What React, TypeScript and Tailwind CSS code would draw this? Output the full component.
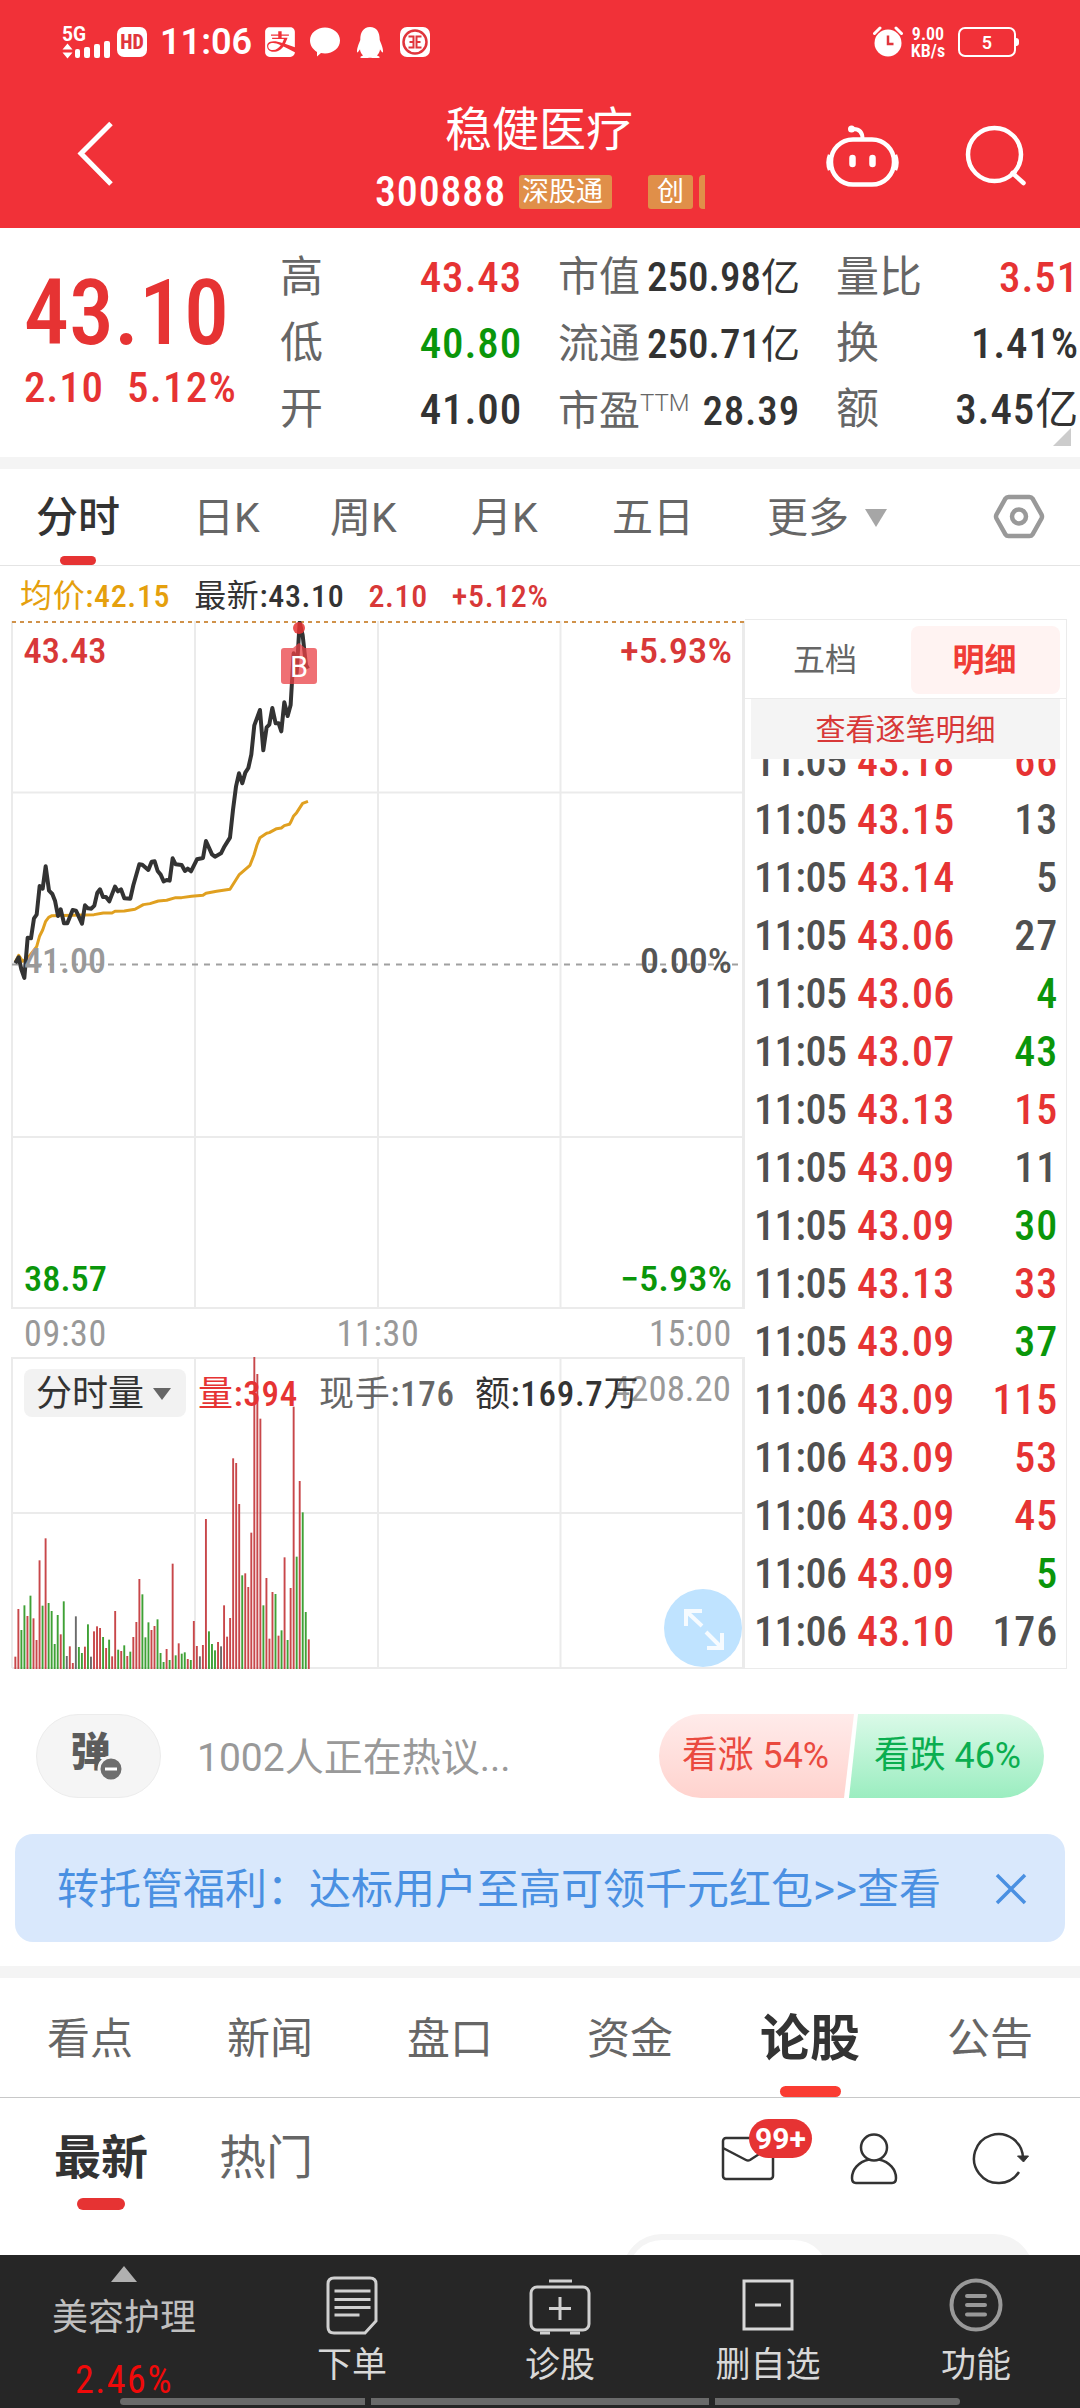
import clsx from "clsx"
import { FaAlipay, FaQq } from "react-icons/fa6"

const UP = "text-[#e63333]"
const DOWN = "text-[#0a960a]"
const DARK = "text-[#333333]"
const FLAT = "text-[#505050]"
const NUM = "font-medium font-stretch-75% tracking-[0.02em]"

const rangeRows = [
  { label: "高", value: "43.43", color: UP },
  { label: "低", value: "40.80", color: DOWN },
  { label: "开", value: "41.00", color: DARK },
]

const periods = [
  { label: "日K", width: "w-[137px]" },
  { label: "周K", width: "w-[141px]" },
  { label: "月K", width: "w-[141px]" },
  { label: "五日", width: "w-[155px]" },
]

const trades = [
  { time: "11:05", price: "43.18", volume: "66", color: UP },
  { time: "11:05", price: "43.15", volume: "13", color: FLAT },
  { time: "11:05", price: "43.14", volume: "5", color: FLAT },
  { time: "11:05", price: "43.06", volume: "27", color: FLAT },
  { time: "11:05", price: "43.06", volume: "4", color: DOWN },
  { time: "11:05", price: "43.07", volume: "43", color: DOWN },
  { time: "11:05", price: "43.13", volume: "15", color: UP },
  { time: "11:05", price: "43.09", volume: "11", color: FLAT },
  { time: "11:05", price: "43.09", volume: "30", color: DOWN },
  { time: "11:05", price: "43.13", volume: "33", color: UP },
  { time: "11:05", price: "43.09", volume: "37", color: DOWN },
  { time: "11:06", price: "43.09", volume: "115", color: UP },
  { time: "11:06", price: "43.09", volume: "53", color: UP },
  { time: "11:06", price: "43.09", volume: "45", color: UP },
  { time: "11:06", price: "43.09", volume: "5", color: DOWN },
  { time: "11:06", price: "43.10", volume: "176", color: FLAT },
]

// r = up, g = down, k = flat; the number is the bar height in thirds of a pixel
const volumeBars =
  "r37 r180 g117 g191 r159 g220 r152 r87 r326 g190 r392 g198 g174 g75 g162 r104 g203 k39 r68 r18 k158 g66 g48 r67 g134 k37 r113 r128 r123 g96 r63 g88 r38 r174 g58 r54 g71 r39 g52 r96 r141 r270 g224 g95 g140 r117 r129 g149 g48 g21 r60 g27 r316 g41 r77 g46 g50 r30 g27 r144 r69 k38 r72 r450 g113 g75 g56 r81 k68 r191 r97 r153 r632 r618 r495 g281 r287 r246 r409 r936 r885 r751 g191 r273 r91 r231 g225 r100 g116 r335 g87 r243 r787 g337 r564 g470 g171 r89"
    .split(" ")
    .map((b) => ({ kind: b[0], height: Number(b.slice(1)) / 3 }))

const barColor: Record<string, string> = { r: "#c8474a", g: "#3fa136", k: "#6b6b6b" }

const priceLine =
  "46,1060 56,1042 64,1078 73,1104 83,983 93,985 102,925 110,914 119,828 128,836 137,769 147,842 157,852 165,872 174,918 182,898 192,940 202,940 218,900 228,902 246,941 255,886 264,895 274,896 283,887 292,848 300,838 309,861 318,861 328,874 345,830 354,844 363,838 373,865 391,866 400,826 418,763 427,764 445,780 455,755 464,754 473,783 482,794 491,814 500,810 509,812 518,745 527,763 545,765 555,783 563,776 573,784 591,748 609,744 618,693 636,733 645,740 663,730 672,712 690,683 699,600 708,530 717,490 727,520 736,488 745,474 754,434 763,346 780,300 790,421 800,352 808,344 817,294 827,340 836,340 844,364 853,277 863,318 872,285 881,130 890,190 899,38 908,75 914,130 918,165 924,176"

const averageLine =
  "46,1056 56,1036 68,1054 82,1046 110,1010 119,978 128,960 137,934 146,922 156,917 282,914 310,909 336,909 345,904 373,903 405,898 430,884 450,881 475,873 500,871 527,863 545,863 575,859 609,856 618,850 650,844 690,838 717,795 750,766 762,735 771,705 780,683 800,670 808,668 830,656 844,654 853,647 868,643 872,637 881,618 890,608 908,580 924,574"

const sections = ["看点", "新闻", "盘口", "资金", "论股", "公告"]

function StatusBar() {
  return (
    <div className="flex h-[84px] items-center pr-[61px] pl-[62px]">
      <svg width="49" height="36" viewBox="0 0 49 36" fill="#fff">
        <text x="0" y="16.500" fontSize="20" fontWeight="700" textLength="24" lengthAdjust="spacingAndGlyphs">
          5G
        </text>
        <path d="M0.500 25.500 5.500 19.500 10.500 25.500zM0.500 28.500 5.500 34.500 10.500 28.500z" />
        <rect x="13" y="25" width="5" height="9" rx="2" />
        <rect x="22" y="23" width="6" height="11" rx="2" />
        <rect x="32" y="20" width="6" height="14" rx="2" />
        <rect x="42" y="17" width="6" height="17" rx="2" />
      </svg>
      <div className="ml-1.5 flex h-[30px] w-[30px] items-center justify-center rounded-[7px] bg-white text-[20px] leading-none font-extrabold text-[#e0353c] font-stretch-75%">
        HD
      </div>
      <span className="ml-[13px] w-[95px] text-[36px] leading-none font-semibold">11:06</span>
      <FaAlipay className="ml-[10px] h-[34px] w-[30px]" />
      <svg className="ml-[15px]" width="30" height="30" viewBox="0 0 30 30" fill="#fff">
        <path d="M15 0.500C23 0.500 30 6 30 13.500S23 26.500 15 26.500c-1.500 0-3-.2-4-.5L7 29.500V25C3 22.500 0 18.500 0 13.500 0 6 7 .5 15 .5z" />
      </svg>
      <FaQq className="ml-[15px] h-[31px] w-[30px]" />
      <svg className="ml-[15px]" width="30" height="30" viewBox="0 0 30 30" fill="none">
        <rect width="30" height="30" rx="7" fill="#fff" />
        <circle cx="15" cy="15" r="11.500" stroke="#e0353c" strokeWidth="2.500" />
        <path d="M8.500 9.500H13.500V20.500H8.500M21.500 9.500H16.500V20.500H21.500M9.500 15H13.500M16.500 15H20.500" stroke="#e0353c" strokeWidth="2" />
      </svg>
      <div className="ml-auto flex items-center">
        <svg width="30" height="32" viewBox="0 0 30 32">
          <circle cx="15" cy="17" r="13.500" fill="#fff" />
          <path d="M1.500 7.500 7 2M28.500 7.500 23 2" stroke="#fff" strokeWidth="3" strokeLinecap="round" />
          <path d="M15 9.500V18h5.500" stroke="#e0353c" strokeWidth="2.500" fill="none" />
        </svg>
        <div className="ml-[7px] flex w-9 flex-col items-center text-[18px] leading-[17px] font-semibold font-stretch-75%">
          <span>9.00</span>
          <span>KB/s</span>
        </div>
        <div className="ml-3 flex h-[30px] w-[58px] items-center justify-center rounded-[7px] border-[2.5px] border-white text-[18px] font-semibold">
          5
        </div>
        <div className="h-2 w-[3px] rounded-r bg-white" />
      </div>
    </div>
  )
}

function Header() {
  return (
    <header className="h-[228px] shrink-0 bg-[#f13138] text-white">
      <StatusBar />
      <div className="flex h-[144px] items-start pr-[53px] pl-[76px]">
        <svg className="mt-9" width="40" height="68" viewBox="0 0 40 68" fill="none" stroke="#fff" strokeWidth="5">
          <path d="M35 3.500 5 33.500 35 64" />
        </svg>
        <div className="ml-[259px] flex w-[330px] flex-col">
          <h1 className="mt-[17px] ml-[70px] text-[47px] leading-[58px]">稳健医疗</h1>
          <div className="mt-[15px] flex h-[36px] items-center">
            <span className={clsx("w-[144px] text-[42px] leading-none", NUM)}>300888</span>
            <span className="flex h-[34px] w-[93px] items-center rounded-[3px] bg-[#e08f49] pl-[3px] text-[27px] leading-none">
              深股通
            </span>
            <span className="ml-9 flex h-[34px] w-[45px] items-center justify-center rounded-[3px] bg-[#e08f49] text-[27px] leading-none">
              创
            </span>
            <span className="ml-1.5 h-[34px] w-1.5 rounded-l bg-[#e08f49]" />
          </div>
        </div>
        <svg className="mt-[38px] ml-auto" width="74" height="66" viewBox="0 0 74 66" fill="none" stroke="#fff" strokeWidth="4.500">
          <rect x="5" y="17.500" width="63" height="45" rx="22" />
          <path d="M4 33c-2 5-2 10 0 15M69 33c2 5 2 10 0 15" />
          <path d="M36.500 17c0-7-3-10-9-10" strokeWidth="4" />
          <circle cx="25.500" cy="7" r="3.500" fill="#fff" stroke="none" />
          <path d="M26.500 36v6M46.500 36v6" strokeWidth="6.500" strokeLinecap="round" />
        </svg>
        <svg className="mt-10 ml-[65px]" width="62" height="64" viewBox="0 0 62 64" fill="none" stroke="#fff" strokeWidth="4.500">
          <circle cx="29.500" cy="30.500" r="26.500" />
          <path d="m47.500 49 11 10" strokeLinecap="round" />
        </svg>
      </div>
    </header>
  )
}

function QuoteSummary() {
  return (
    <section className="flex h-[229px] shrink-0 bg-white text-[43px] leading-[66px] whitespace-nowrap text-[#666666]">
      <div className={clsx("w-[280px] pl-6", NUM, UP)}>
        <div className="mt-[40px] text-[90px] leading-[92px] tracking-normal">43.10</div>
        <div className="mt-[-6px] flex gap-[23px]">
          <span>2.10</span>
          <span className="tracking-[0.03em]">5.12%</span>
        </div>
      </div>
      <div className="mt-4 w-[242px]">
        {rangeRows.map((row) => (
          <div key={row.label} className="flex justify-between">
            <span>{row.label}</span>
            <span className={clsx(NUM, row.color)}>{row.value}</span>
          </div>
        ))}
      </div>
      <div className="mt-4 ml-[36px] w-[242px] text-[41px]">
        <div className="flex justify-between">
          <span>市值</span>
          <span className={clsx("font-medium font-stretch-75%", DARK)}>
            250.98<span className="text-[39px] font-normal">亿</span>
          </span>
        </div>
        <div className="flex justify-between">
          <span>流通</span>
          <span className={clsx("font-medium font-stretch-75%", DARK)}>
            250.71<span className="text-[39px] font-normal">亿</span>
          </span>
        </div>
        <div className="flex justify-between">
          <span className="flex">
            市盈
            <span className="-mt-2 text-[24px] font-light">TTM</span>
          </span>
          <span className={clsx(NUM, DARK)}>28.39</span>
        </div>
      </div>
      <div className="mt-4 ml-[36px] w-[243px]">
        <div className="flex justify-between">
          <span>量比</span>
          <span className={clsx(NUM, UP)}>3.51</span>
        </div>
        <div className="flex justify-between">
          <span>换</span>
          <span className={clsx(NUM, DARK)}>1.41%</span>
        </div>
        <div className="relative flex justify-between">
          <span>额</span>
          <span className={clsx(NUM, DARK)}>
            3.45<span className="font-normal">亿</span>
          </span>
          <svg className="absolute right-2 -bottom-1" width="18" height="18">
            <path d="M18 0v18H0z" fill="#cccccc" />
          </svg>
        </div>
      </div>
    </section>
  )
}

function PeriodTabs() {
  return (
    <nav className="flex h-[97px] shrink-0 items-stretch border-b border-[#e4e4e4] bg-white pl-9 text-[41px] leading-[98px] text-[#666666]">
      <div className={clsx("flex w-[157px] flex-col text-[42px] font-medium", DARK)}>
        <span className="h-[87px]">分时</span>
        <span className="ml-6 h-[9px] w-9 rounded-full bg-[#e63333]" />
      </div>
      {periods.map((p) => (
        <span key={p.label} className={p.width}>
          {p.label}
        </span>
      ))}
      <span className="w-[82px]">更多</span>
      <svg className="mt-[39px] ml-[15px]" width="24" height="20">
        <path d="M1 1h22L12 19z" fill="#a6a6a6" />
      </svg>
      <svg className="mt-[23px] ml-[105px]" width="52" height="50" viewBox="0 0 52 50" fill="none" stroke="#999999" strokeWidth="4.500">
        <path d="M15.500 5h21q2 0 3 1.500l9 16q1 2 0 4l-9 16q-1 1.500-3 1.500h-21q-2 0-3-1.500l-9-16q-1-2 0-4l9-16q1-1.500 3-1.500z" />
        <circle cx="26" cy="24.500" r="7" />
      </svg>
    </nav>
  )
}

function PriceChart() {
  return (
    <svg className="block" width="745" height="736" viewBox="0 621 745 736" fill="none">
      <path d="M12 621V1309M195 621V1309M378 621V1309M560.500 621V1309M12 792.500H744M12 1137H744M12 1308H744" stroke="#ebebeb" strokeWidth="2" />
      <path d="M743.500 619V1309" stroke="#ebebeb" strokeWidth="3" />
      <path d="M12 964.500H744" stroke="#a0a0a0" strokeWidth="2" strokeDasharray="6 6" />
      <path d="M12 622H744" stroke="#d0924a" strokeWidth="2" strokeDasharray="4 4" />
      <g transform="translate(0 610) scale(0.3333)" strokeLinejoin="round" strokeWidth="12">
        <polyline points={averageLine} stroke="#e0a020" strokeWidth="9" />
        <polyline points={priceLine} stroke="#333333" />
      </g>
      <circle cx="299" cy="628" r="6" fill="#e63333" fillOpacity="0.85" />
      <path d="M293 648l6-5 6 5h9a3 3 0 0 1 3 3v30a3 3 0 0 1-3 3h-30a3 3 0 0 1-3-3v-30a3 3 0 0 1 3-3z" fill="#ea4046" fillOpacity="0.75" />
      <text x="299" y="676.500" fontSize="29" fill="#fff" textAnchor="middle">
        B
      </text>
      <g fontSize="35" className="font-medium font-stretch-75%">
        <text x="23.5" y="662.500" fill="#d83838" textLength="83" lengthAdjust="spacingAndGlyphs">
          43.43
        </text>
        <text x="620" y="662.500" fill="#d83838" textLength="112" lengthAdjust="spacingAndGlyphs">
          +5.93%
        </text>
        <text x="24" y="973" fill="#999999" textLength="82" lengthAdjust="spacingAndGlyphs">
          41.00
        </text>
        <text x="640" y="973" fill="#555555" textLength="92" lengthAdjust="spacingAndGlyphs">
          0.00%
        </text>
        <text x="24" y="1291" fill="#0a960a" textLength="83" lengthAdjust="spacingAndGlyphs">
          38.57
        </text>
        <text x="620" y="1291" fill="#0a960a" textLength="112" lengthAdjust="spacingAndGlyphs">
          −5.93%
        </text>
      </g>
      <g fontSize="36" fill="#999999" className="tracking-[0.02em] font-stretch-75%">
        <text x="24" y="1346">09:30</text>
        <text x="378" y="1346" textAnchor="middle">11:30</text>
        <text x="732" y="1346" textAnchor="end">15:00</text>
      </g>
    </svg>
  )
}

function VolumeChart() {
  return (
    <div className="relative h-[312px] w-[745px]">
      <svg className="block" width="745" height="312" viewBox="0 1357 745 312" fill="none">
        <path d="M12 1357V1668M195 1357V1668M378 1357V1668M560.500 1357V1668M12 1358H744M12 1513H744M12 1668H744" stroke="#ebebeb" strokeWidth="2" />
        <path d="M743.500 1357V1669" stroke="#ebebeb" strokeWidth="3" />
        {volumeBars.map((bar, i) => (
          <rect key={i} x={14.4 + i * 3.025} y={1669 - bar.height} width="1.9" height={bar.height} fill={barColor[bar.kind]} />
        ))}
        <text x="612" y="1400.500" fontSize="35" fill="#999999" textLength="119" lengthAdjust="spacingAndGlyphs" className="font-stretch-75%">
          4208.20
        </text>
      </svg>
      {/* Legend drawn over the bars */}
      <div className="absolute top-3 left-6 flex h-12 items-center text-[35px] leading-[50px] whitespace-nowrap">
        <div className="flex h-12 w-[162px] items-center rounded-lg bg-[#f2f2f2] pt-0.5 pl-3 text-[36px] text-[#333333]">
          分时量
          <svg className="ml-2" width="20" height="14">
            <path d="M1 1h18L10 13z" fill="#666666" />
          </svg>
        </div>
        <span className={clsx("mt-1 ml-[12px] w-[121px]", NUM, UP)}>
          <span className="font-normal">量</span>:394
        </span>
        <span className={clsx("mt-1 w-[156px] text-[#666666]", NUM)}>
          <span className="font-normal">现手</span>:176
        </span>
        <span className={clsx("mt-1", NUM, DARK)}>
          <span className="font-normal">额</span>:169.7<span className="font-normal">万</span>
        </span>
      </div>
      <div className="absolute right-[3px] bottom-[2px] h-[78px] w-[78px] rounded-full bg-[#bfe3ff]">
        <svg width="78" height="78" fill="none" stroke="#fff" strokeOpacity="0.85" strokeWidth="4">
          <path d="M38 22H22v15M22 22l16 15M58 44v15H43M58 59 42 43" />
        </svg>
      </div>
    </div>
  )
}

function TradePanel() {
  return (
    <aside className="flex h-[1050px] w-[322px] flex-col border-t border-r border-b border-[#ebebeb]">
      <div className="flex h-[79px] shrink-0 items-center border-b border-[#ebebeb] pt-0.5 text-[32px]">
        <span className="w-[160px] text-center text-[#666666]">五档</span>
        <span className="ml-1.5 flex h-[68px] w-[149px] items-center justify-center rounded-lg bg-[#fff3f2] pr-0.5 font-bold text-[#f03c36]">
          明细
        </span>
      </div>
      <div className="mx-1.5 flex h-[60px] shrink-0 items-center justify-center bg-[#f4f4f4] text-[30px] text-[#d83838]">
        查看逐笔明细
      </div>
      <div className="flex flex-1 flex-col justify-end overflow-hidden pb-[7px]">
        {trades.map((t, i) => (
          <div key={i} className={clsx("flex h-[58px] shrink-0 items-center pr-2 pl-[9px] text-[42px] leading-none", NUM)}>
            <span className="w-[103px] tracking-[-0.01em] text-[#505050]">{t.time}</span>
            <span className={clsx("tracking-[0.01em]", UP)}>{t.price}</span>
            <span className={clsx("ml-auto", t.color)}>{t.volume}</span>
          </div>
        ))}
      </div>
    </aside>
  )
}

function Discussion() {
  return (
    <section className="mt-[45px] flex h-[84px] shrink-0 items-center px-9">
      <div className="relative flex h-[84px] w-[125px] items-center justify-center rounded-full border border-[#ececec] bg-[#f5f5f5] pr-4 pb-1.5 text-[40px] font-black text-[#5c5c5c]">
        弹
        <svg className="absolute top-[40px] left-[60px]" width="28" height="28">
          <circle cx="14" cy="14" r="12" fill="#6e6e6e" stroke="#f5f5f5" strokeWidth="3" />
          <path d="M8 14h12" stroke="#fff" strokeWidth="3" />
        </svg>
      </div>
      <span className="mt-1 ml-9 text-[39px]/[84px] text-[#999999]">1002人正在热议...</span>
      <svg className="ml-auto" width="385" height="84" viewBox="0 0 385 84">
        <defs>
          <linearGradient id="bull" x2="0" y2="1">
            <stop stopColor="#ffebea" />
            <stop offset="1" stopColor="#ffd3ce" />
          </linearGradient>
          <linearGradient id="bear" x2="0" y2="1">
            <stop stopColor="#dafae8" />
            <stop offset="1" stopColor="#9bedc0" />
          </linearGradient>
        </defs>
        <path d="M42 0H195L185 84H42A42 42 0 0 1 42 0z" fill="url(#bull)" />
        <path d="M199 0H343A42 42 0 0 1 343 84H190z" fill="url(#bear)" />
        <text x="23" y="54" fontSize="37" fill="#ea4a3f" textLength="147" lengthAdjust="spacingAndGlyphs">
          看涨 54%
        </text>
        <text x="215" y="54" fontSize="37" fill="#0aae50" textLength="147" lengthAdjust="spacingAndGlyphs">
          看跌 46%
        </text>
      </svg>
    </section>
  )
}

function Banner() {
  return (
    <div className="mx-[15px] mt-9 flex h-[108px] shrink-0 items-center rounded-[18px] bg-[#d9e8fc] pt-0.5 pl-[42px] text-[42px] whitespace-nowrap text-[#4a90e2]">
      <span>转托管福利：达标用户至高可领千元红包&gt;&gt;查看</span>
      <svg className="mr-[38px] ml-auto" width="32" height="32" stroke="#4a90e2" strokeWidth="3.500">
        <path d="M2 2 30 30M30 2 2 30" />
      </svg>
    </div>
  )
}

function SectionTabs() {
  return (
    <nav className="flex h-[120px] shrink-0 border-b border-[#c8c8c8] text-[43px] leading-[123px] text-[#666666]">
      {sections.map((s) => {
        const active = s === "论股"
        return (
          <div key={s} className={clsx("flex w-[180px] flex-col items-center", active && "text-[50px] font-bold text-[#333333]")}>
            <span className="h-[108px]">{s}</span>
            {active && <span className="h-[11px] w-[61px] rounded-full bg-[#fa3c32]" />}
          </div>
        )
      })}
    </nav>
  )
}

function CommentTabs() {
  return (
    <section className="h-[157px] shrink-0 overflow-hidden">
      <div className="flex h-[136px] items-start pl-[53px] text-[47px] leading-[119px] text-[#666666]">
        <div className="flex w-[96px] flex-col items-center font-bold text-[#333333]">
          <span className="h-[100px]">最新</span>
          <span className="h-3 w-12 rounded-full bg-[#e63333]" />
        </div>
        <span className="ml-[70px]">热门</span>
        <div className="relative mt-[35px] ml-[408px]">
          <svg width="54" height="50" fill="none" stroke="#333333" strokeWidth="2.500">
            <rect x="2" y="5" width="50" height="41" rx="3" />
            <path d="m2 15 23 12q2 1 4 0l23-15" />
          </svg>
          <span className="absolute -top-[14px] left-[28px] flex h-[39px] w-[63px] items-center justify-center rounded-full bg-[#e63333] text-[30px] leading-none font-bold text-white">
            99+
          </span>
        </div>
        <svg className="mt-[34px] ml-[74px]" width="50" height="54" fill="none" stroke="#333333" strokeWidth="2.500">
          <circle cx="25" cy="15.500" r="13" />
          <path d="M20 27.500C9 30 3 38 3 46q0 5 4 5h36q4 0 4-5c0-8-6-16-17-18.500" />
        </svg>
        <svg className="mt-[34px] ml-[73px]" width="60" height="54" fill="none" stroke="#333333" strokeWidth="2.500">
          <path d="M51 27A24.500 24.500 0 1 0 47 40" />
          <path d="m45.500 24 6 6 5-6z" fill="#333333" strokeWidth="1" />
        </svg>
      </div>
      <div className="ml-[622px] h-20 w-[412px] rounded-full bg-[#f4f4f4] p-1.5">
        <div className="h-[68px] w-[200px] rounded-full bg-white" />
      </div>
    </section>
  )
}

function BottomBar() {
  return (
    <footer className="h-[153px] shrink-0 bg-[#262626] text-[35px] text-[#d8d8d8]">
      <div className="flex h-[143px]">
        <div className="flex w-[248px] flex-col items-center pt-[11px] text-[36px] text-[#bfbfbf]">
          <svg className="shrink-0" width="26" height="16">
            <path d="M13 0 26 16H0z" fill="#b0b0b0" />
          </svg>
          <span className="mt-[10px] leading-[52px]">美容护理</span>
          <span className="mt-[16px] text-[38px] leading-[40px] tracking-[0.04em] text-[#f00a0a] font-stretch-75%">2.46%</span>
        </div>
        <div className="flex w-[208px] flex-col items-center pt-[19px]">
          <svg width="54" height="62" fill="none" stroke="#d0d0d0" strokeWidth="3">
            <path d="M9 4h36q6 0 6 6v37L40 59H9q-6 0-6-6V10q0-6 6-6z" />
            <path d="M9.500 17h36M9.500 25.500h36M9.500 33.500h36M9.500 41h25" />
          </svg>
          <span className="leading-[59px]">下单</span>
        </div>
        <div className="flex w-[208px] flex-col items-center pt-[19px]">
          <svg width="62" height="62" fill="none" stroke="#d0d0d0" strokeWidth="3">
            <rect x="2" y="13" width="58" height="43" rx="6" />
            <path d="M20 7h23M31 23v23M20 34.500h22M11 59h10M41 59h10" />
          </svg>
          <span className="leading-[59px]">诊股</span>
        </div>
        <div className="flex w-[208px] flex-col items-center pt-[19px]">
          <svg width="54" height="62" fill="none" stroke="#d8d8d8" strokeWidth="3">
            <rect x="3" y="7" width="48" height="48" />
            <path d="M14 31h26" />
          </svg>
          <span className="leading-[59px]">删自选</span>
        </div>
        <div className="flex w-[208px] flex-col items-center pt-[19px]">
          <svg width="54" height="62" fill="none" stroke="#999999" strokeWidth="4">
            <circle cx="27" cy="31" r="24.500" />
            <path d="M18 22h18M18 31h18M18 40.500h18" strokeLinecap="round" />
          </svg>
          <span className="leading-[59px]">功能</span>
        </div>
      </div>
      <div className="mx-auto flex h-[7px] w-[840px] gap-1.5">
        <span className="w-[245px] rounded-l-full bg-[#6a6a6a]" />
        <span className="flex-1 bg-[#6a6a6a]" />
        <span className="w-[245px] rounded-r-full bg-[#6a6a6a]" />
      </div>
    </footer>
  )
}

export default function App() {
  return (
    <div className="flex h-[2408px] w-[1080px] flex-col overflow-hidden bg-white font-['Roboto','Noto_Sans_CJK_SC',sans-serif]">
      <Header />
      <QuoteSummary />
      <div className="h-3 shrink-0 bg-[#f4f4f4]" />
      <PeriodTabs />
      <div className={clsx("flex h-[53px] shrink-0 items-center gap-[24px] pt-1.5 pl-[20px] text-[32px] leading-none", NUM)}>
        <span className="text-[#e5a00d]">
          <span className="font-normal">均价</span>:42.15
        </span>
        <span className={DARK}>
          <span className="font-normal">最新</span>:43.10
        </span>
        <span className="text-[#d83838]">2.10</span>
        <span className="text-[#d83838]">+5.12%</span>
      </div>
      <div className="flex h-[1050px] shrink-0 pt-0.5">
        <div className="flex flex-col">
          <PriceChart />
          <VolumeChart />
        </div>
        <div className="-mt-0.5">
          <TradePanel />
        </div>
      </div>
      <Discussion />
      <Banner />
      <div className="mt-6 h-3 shrink-0 bg-[#f4f4f4]" />
      <SectionTabs />
      <CommentTabs />
      <BottomBar />
    </div>
  )
}
